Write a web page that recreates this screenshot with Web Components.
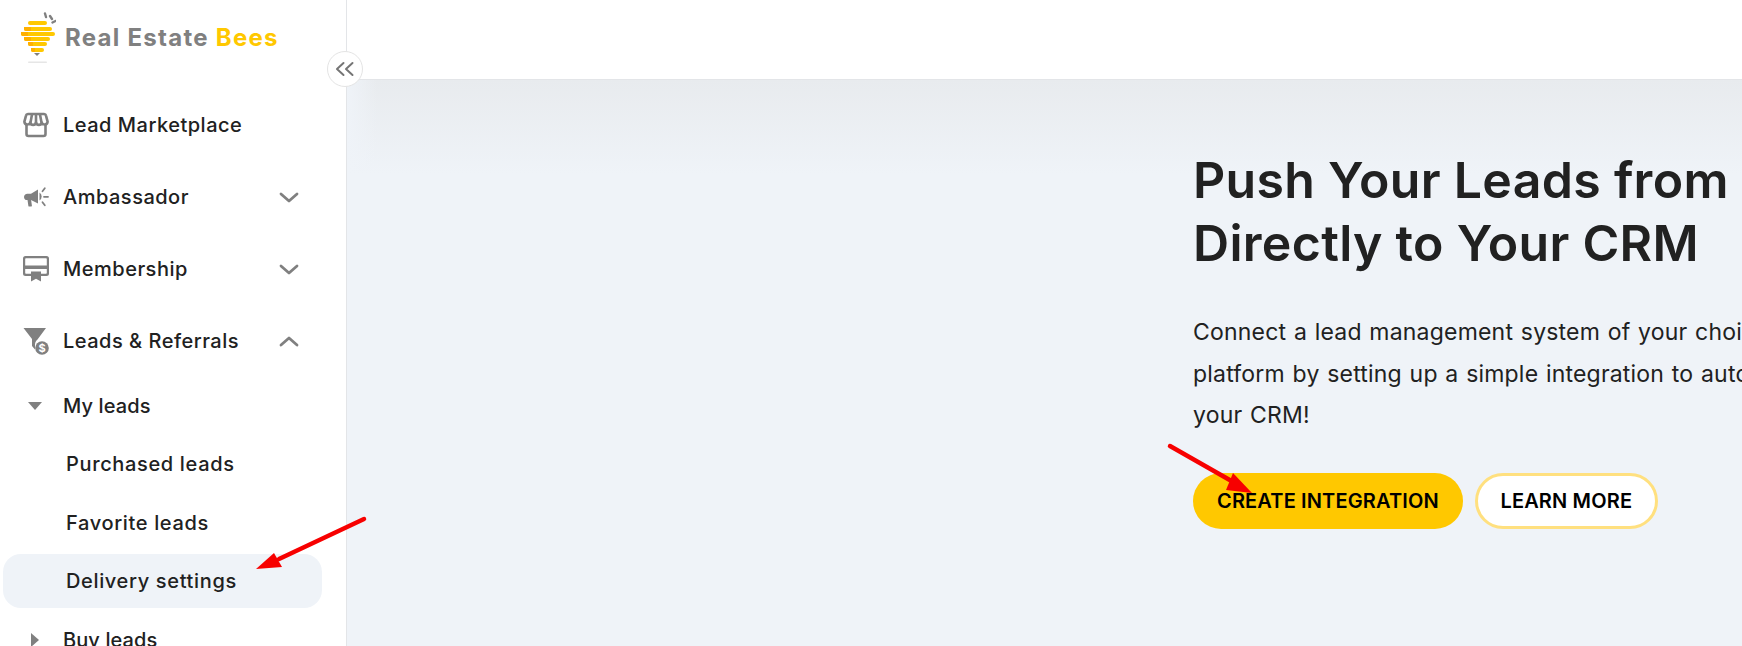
<!DOCTYPE html>
<html lang="en">
<head>
<meta charset="utf-8">
<title>Delivery settings</title>
<style>
  html, body { margin: 0; height: 100%; overflow: hidden; background: #fff; }
  body { font-family: "Inter", "Noto Sans", sans-serif; color: #212121; }
</style>
</head>
<body>
<re-app>
  <re-sidebar slot="side">
    <re-nav-item label="Lead Marketplace">
      <svg slot="icon" width="26" height="26" viewBox="0 0 26 26" fill="none" stroke="#808080" stroke-width="2.600" stroke-linejoin="round">
        <path d="M3.500 12v10a2 2 0 0 0 2 2h15a2 2 0 0 0 2-2V12"/>
        <path d="M5 2h16a2 2 0 0 1 2 1.600l1.600 6a3 3 0 0 1-5.800 1 3 3 0 0 1-5.800 0 3 3 0 0 1-5.800 0 3 3 0 0 1-5.800-1L3 3.600A2 2 0 0 1 5 2Z"/>
        <path d="M9 2.500 7.400 11M13 2.500V11M17 2.500l1.600 8.500"/>
      </svg>
    </re-nav-item>
    <re-nav-item label="Ambassador" chevron="down">
      <svg slot="icon" width="26" height="26" viewBox="0 0 26 26" fill="#808080">
        <path d="M15 5.500v14l-7-3.400H4.400A3.200 3.200 0 0 1 1 13c0-1.900 1.400-3.200 3.400-3.200H8Z"/>
        <path d="M4.500 16h3.600l.8 5.600a.8.8 0 0 1-.8 1H6.200a.8.8 0 0 1-.8-.7Z"/>
        <path d="M16.500 8.500a4.800 4.800 0 0 1 0 8Z"/>
        <path d="M19.500 7.300l2.300-3" stroke="#808080" stroke-width="1.800" stroke-linecap="round"/>
        <path d="M21 12.800h4" stroke="#808080" stroke-width="1.800" stroke-linecap="round"/>
        <path d="M19.500 18.300l2.300 3" stroke="#808080" stroke-width="1.800" stroke-linecap="round"/>
      </svg>
    </re-nav-item>
    <re-nav-item label="Membership" chevron="down">
      <svg slot="icon" width="26" height="26" viewBox="0 0 26 26" fill="#808080">
        <path fill-rule="evenodd" d="M2.500 0h21A2.500 2.500 0 0 1 26 2.500v15a2.500 2.500 0 0 1-2.500 2.500H18v-2.200h5a.8.8 0 0 0 .8-.8V13H2.200v4a.8.8 0 0 0 .8.8h5V20H2.500A2.500 2.500 0 0 1 0 17.500v-15A2.500 2.500 0 0 1 2.500 0ZM3 2.200a.8.8 0 0 0-.8.8V9.500h21.600V3a.8.800 0 0 0-.8-.8Z"/>
        <path d="M8 15.500h10v10l-5-2.700-5 2.700Z"/>
      </svg>
    </re-nav-item>
    <re-nav-item label="Leads &amp; Referrals" chevron="up">
      <svg slot="icon" width="26" height="28" viewBox="0 0 26 28" fill="#808080">
        <path d="M.5 1h22.500l-8.500 11.500a7.500 7.500 0 0 0-2.500 6.300v3.700l-3-3.500v-7Z"/>
        <circle cx="19" cy="21" r="6.800"/>
        <text x="19" y="25" text-anchor="middle" font-family="Inter, sans-serif" font-size="11" font-weight="700" fill="#fff">$</text>
      </svg>
    </re-nav-item>
    <re-sub-item label="My leads" caret="down"></re-sub-item>
    <re-leaf-item>Purchased leads</re-leaf-item>
    <re-leaf-item>Favorite leads</re-leaf-item>
    <re-leaf-item active>Delivery settings</re-leaf-item>
    <re-sub-item label="Buy leads" caret="right"></re-sub-item>
  </re-sidebar>
  <re-hero slot="main">
    <span slot="title">Push Your Leads from<br>Directly to Your CRM</span>
    <span slot="text">Connect a lead management system of your choice<br>platform by setting up a simple integration to automatically<br>your CRM!</span>
    <re-button slot="actions" kind="primary">CREATE INTEGRATION</re-button>
    <re-button slot="actions" kind="outline">LEARN MORE</re-button>
  </re-hero>
</re-app>

<script>
class ReApp extends HTMLElement {
  constructor() {
    super();
    this.attachShadow({mode: 'open'});
    this.shadowRoot.innerHTML = `
    <style>
      :host { display: grid; grid-template-columns: 347px 1fr; height: 646px; width: 1742px; overflow: hidden; position: relative; }
      .right { display: flex; flex-direction: column; min-width: 0; }
      .top { height: 80px; box-sizing: border-box; background: #fff; border-bottom: 1px solid #e3e5e8; flex: none; }
      .toggle {
        position: absolute; left: 327px; top: 51px; width: 36px; height: 36px; box-sizing: border-box;
        border-radius: 50%; background: #fff; border: 1px solid #e4e4e4; display: flex; align-items: center; justify-content: center;
      }
      .marks { position: absolute; left: 0; top: 0; pointer-events: none; }
    </style>
    <slot name="side"></slot>
    <div class="right">
      <div class="top"></div>
      <slot name="main"></slot>
    </div>
    <div class="toggle">
      <svg width="22" height="16" viewBox="0 0 22 16" fill="none" stroke="#757575" stroke-width="2" stroke-linecap="round" stroke-linejoin="round">
        <path d="M9.500 2 3 8l6.500 6M18.500 2 12 8l6.500 6"/>
      </svg>
    </div>
    <svg class="marks" width="1742" height="646" viewBox="0 0 1742 646" fill="#f70000">
      <path d="M364 519 279 559" stroke="#f70000" stroke-width="4.500" stroke-linecap="round"/>
      <path d="M256 569 274 553 282 567Z"/>
      <path d="M1170 446 1235 483" stroke="#f70000" stroke-width="4.500" stroke-linecap="round"/>
      <path d="M1252 493 1226 490 1233 473Z"/>
    </svg>`;
  }
}

class ReSidebar extends HTMLElement {
  constructor() {
    super();
    this.attachShadow({mode: 'open'});
    this.shadowRoot.innerHTML = `
    <style>
      :host { display: flex; flex-direction: column; box-sizing: border-box; border-right: 1px solid #e3e5e8; background: #fff; height: 646px; overflow: hidden; }
      .logo { height: 89px; flex: none; box-sizing: border-box; padding: 12px 0 0 20px; display: flex; gap: 9px; align-items: flex-start; }
      .name { font: 700 24px/1 "Inter", sans-serif; color: #808080; margin-top: 14px; letter-spacing: 1.270px; white-space: nowrap; }
      .name b { color: #ffc800; font-weight: 700; }
      nav { display: flex; flex-direction: column; }
    </style>
    <div class="logo">
      <svg width="36" height="52" viewBox="0 0 36 52" fill="none">
        <g stroke="#808080" stroke-width="2.400" stroke-linecap="round">
          <path d="M25 1.500 26 5M30 4l2 3M32.500 10.500l3-1.500"/>
        </g>
        <rect x="8" y="9" width="19" height="4" rx="2" fill="#ffc800"/>
        <rect x="4" y="15" width="28" height="4" rx="2" fill="#ffc800"/>
        <rect x="1" y="20" width="34" height="4" rx="2" fill="#ffc800"/>
        <rect x="4" y="25" width="26" height="4" rx="2" fill="#ffc800"/>
        <rect x="8" y="30" width="19" height="4" rx="2" fill="#ffc800"/>
        <rect x="11" y="36" width="13" height="4" rx="2" fill="#ffc800"/>
        <path d="M4 15h7v4H6a2 2 0 0 1-2-2ZM1 20h7v4H3a2 2 0 0 1-2-2ZM4 25h7v4H6a2 2 0 0 1-2-2ZM8 30h5v4h-3a2 2 0 0 1-2-2ZM11 36h4v4h-2a2 2 0 0 1-2-2Z" fill="#ffb000"/>
        <path d="M14 41h6l-3 3Z" fill="#808080"/>
        <rect x="8" y="49.500" width="19" height="1.500" rx=".75" fill="#e6e6e6"/>
      </svg>
      <div class="name">Real Estate <b>Bees</b></div>
    </div>
    <nav><slot></slot></nav>`;
  }
}

class ReNavItem extends HTMLElement {
  constructor() {
    super();
    this.attachShadow({mode: 'open'});
    const label = this.getAttribute('label');
    const chevron = this.getAttribute('chevron');
    const points = chevron === 'up' ? 'M2 10l8-7 8 7' : 'M2 3l8 7 8-7';
    this.shadowRoot.innerHTML = `
    <style>
      :host { display: flex; align-items: center; height: 72px; padding: 0 47px 0 23px; color: #212121; }
      .icon { width: 26px; height: 28px; display: flex; align-items: center; flex: none; margin-right: 14px; }
      .label { flex: 1; font-size: 20px; font-weight: 550; letter-spacing: .5px; white-space: nowrap; }
      svg { display: block; }
    </style>
    <span class="icon"><slot name="icon"></slot></span>
    <span class="label">${label}</span>
    ${chevron ? `<svg width="20" height="13" viewBox="0 0 20 13" fill="none" stroke="#808080" stroke-width="2.800" stroke-linecap="round" stroke-linejoin="round"><path d="${points}"/></svg>` : ''}`;
  }
}

class ReSubItem extends HTMLElement {
  constructor() {
    super();
    this.attachShadow({mode: 'open'});
    const shape = this.getAttribute('caret') === 'down'
      ? '<path d="M0 3h14L7 11Z"/>'
      : '<path d="M3 0l8 7-8 7Z"/>';
    this.shadowRoot.innerHTML = `
    <style>
      :host { display: flex; align-items: center; height: 58px; padding-left: 28px; color: #212121; }
      .caret { width: 35px; flex: none; display: flex; }
      .label { font-size: 20px; font-weight: 500; letter-spacing: .1px; white-space: nowrap; }
    </style>
    <span class="caret"><svg width="14" height="14" viewBox="0 0 14 14" fill="#808080">${shape}</svg></span>
    <span class="label">${this.getAttribute('label')}</span>`;
  }
}

class ReLeafItem extends HTMLElement {
  constructor() {
    super();
    this.attachShadow({mode: 'open'});
    this.shadowRoot.innerHTML = `
    <style>
      :host { display: flex; align-items: center; height: 54px; margin: 2px 24px 2.500px 3px; padding-left: 63px; border-radius: 18px; color: #212121; font-size: 20px; font-weight: 550; letter-spacing: .65px; white-space: nowrap; }
      :host([active]) { background: #eff3f8; }
    </style>
    <slot></slot>`;
  }
}

class ReHero extends HTMLElement {
  constructor() {
    super();
    this.attachShadow({mode: 'open'});
    this.shadowRoot.innerHTML = `
    <style>
      :host { display: flex; flex: 1; min-width: 0; box-sizing: border-box; padding: 69px 0 0 847px; overflow: hidden;
        background: linear-gradient(90deg, #eff3f8 0, rgba(239,243,248,0) 30px), linear-gradient(180deg, #e8ebee 0, #eff3f8 95px) #eff3f8; }
      .col { display: flex; flex-direction: column; white-space: nowrap; margin-left: -1px; }
      h1 { margin: 0; font-size: 50px; line-height: 63px; font-weight: 600; color: #212121; letter-spacing: .3px; }
      p { margin: 37px 0 0; font-size: 23px; line-height: 41.700px; letter-spacing: .2px; word-spacing: 1px; color: #212121; }
      .actions { display: flex; gap: 12px; margin-top: 36px; }
    </style>
    <div class="col">
      <h1><slot name="title"></slot></h1>
      <p><slot name="text"></slot></p>
      <div class="actions"><slot name="actions"></slot></div>
    </div>`;
  }
}

class ReButton extends HTMLElement {
  constructor() {
    super();
    this.attachShadow({mode: 'open'});
    this.shadowRoot.innerHTML = `
    <style>
      :host { display: inline-flex; align-items: center; justify-content: center; box-sizing: border-box; height: 56px; padding: 0 24px; border-radius: 28px; font-size: 20px; font-weight: 600; letter-spacing: .15px; color: #000; white-space: nowrap; }
      :host([kind="primary"]) { background: #ffc800; }
      :host([kind="outline"]) { background: #fff; border: 3px solid #ffe07f; padding: 0 22.500px; }
    </style>
    <slot></slot>`;
  }
}

customElements.define('re-app', ReApp);
customElements.define('re-sidebar', ReSidebar);
customElements.define('re-nav-item', ReNavItem);
customElements.define('re-sub-item', ReSubItem);
customElements.define('re-leaf-item', ReLeafItem);
customElements.define('re-hero', ReHero);
customElements.define('re-button', ReButton);
</script>
</body>
</html>
